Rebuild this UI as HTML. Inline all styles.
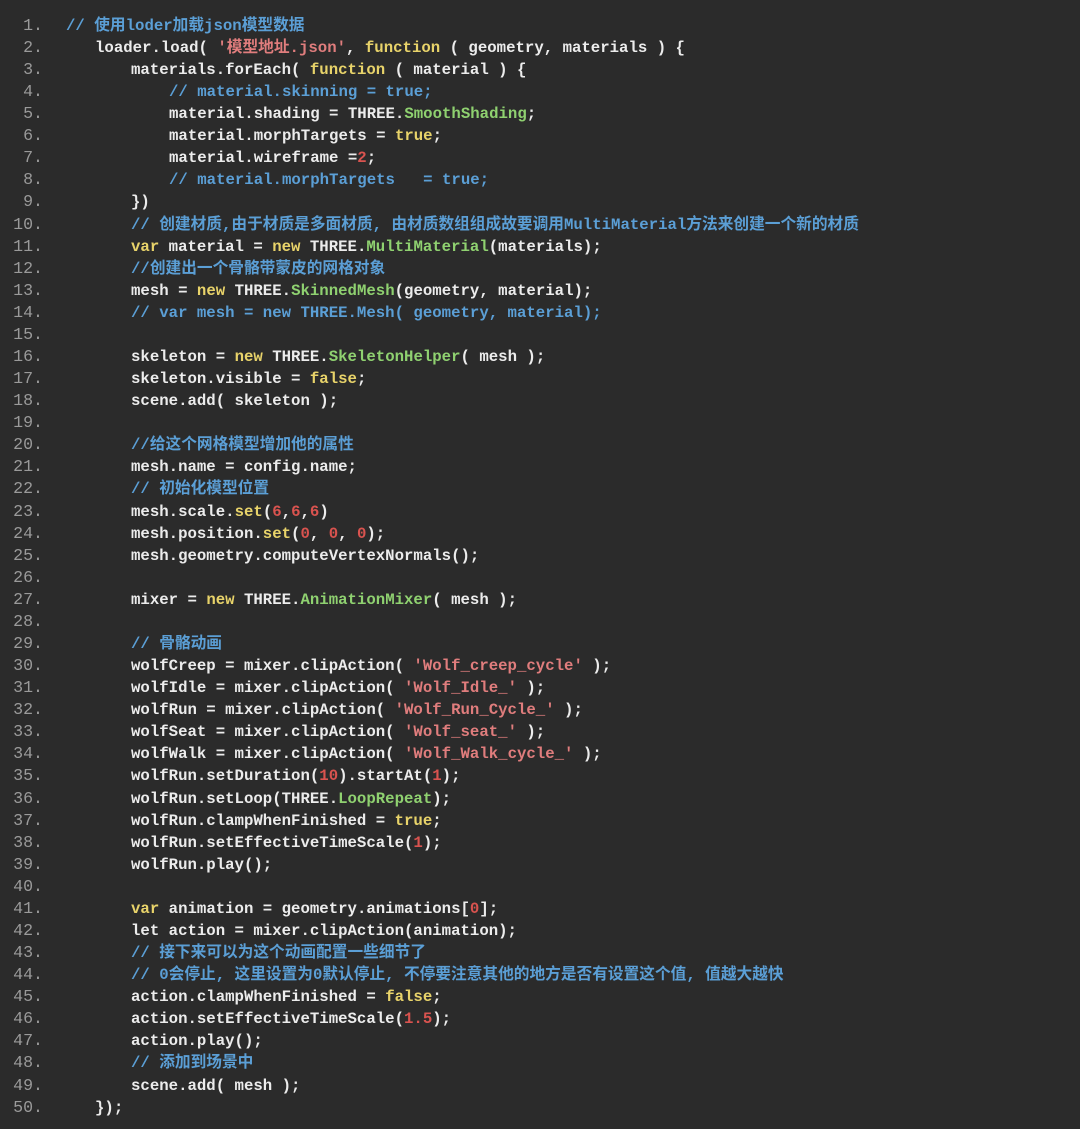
<!DOCTYPE html>
<html><head><meta charset="utf-8"><style>
html,body{margin:0;padding:0;background:#2b2b2b;}
body{width:1080px;height:1129px;overflow:hidden;position:relative;font-family:"Liberation Mono","Noto Sans CJK SC",monospace;font-size:15.7px;}
.l{position:absolute;left:0;height:22.08px;line-height:22.08px;white-space:pre;color:#ececec;font-weight:bold;}
.n{display:inline-block;width:43px;text-align:right;color:#9a9a9a;font-weight:normal;font-family:"Liberation Mono",monospace;font-size:16.6px;}
.c{color:#5b9fd6;}
.k{color:#e8d36a;}
.s{color:#e07d7d;}
.g{color:#8fd170;}
.r{color:#d9534f;}
.i0{position:absolute;left:66px}.i1{position:absolute;left:95px}.i2{position:absolute;left:131px}.i3{position:absolute;left:169px}
</style></head><body>
<div class="l" style="top:15px"><span class="n">1.</span><span class="i0 c">// 使用loder加载json模型数据</span></div>
<div class="l" style="top:37px"><span class="n">2.</span><span class="i1">loader.load( <span class="s">'模型地址.json'</span>, <span class="k">function</span> ( geometry, materials ) {</span></div>
<div class="l" style="top:59px"><span class="n">3.</span><span class="i2">materials.forEach( <span class="k">function</span> ( material ) {</span></div>
<div class="l" style="top:81px"><span class="n">4.</span><span class="i3 c">// material.skinning = true;</span></div>
<div class="l" style="top:103px"><span class="n">5.</span><span class="i3">material.shading = THREE.<span class="g">SmoothShading</span>;</span></div>
<div class="l" style="top:125px"><span class="n">6.</span><span class="i3">material.morphTargets = <span class="k">true</span>;</span></div>
<div class="l" style="top:147px"><span class="n">7.</span><span class="i3">material.wireframe =<span class="r">2</span>;</span></div>
<div class="l" style="top:169px"><span class="n">8.</span><span class="i3 c">// material.morphTargets   = true;</span></div>
<div class="l" style="top:191px"><span class="n">9.</span><span class="i2">})</span></div>
<div class="l" style="top:214px"><span class="n">10.</span><span class="i2 c">// 创建材质,由于材质是多面材质, 由材质数组组成故要调用MultiMaterial方法来创建一个新的材质</span></div>
<div class="l" style="top:236px"><span class="n">11.</span><span class="i2"><span class="k">var</span> material = <span class="k">new</span> THREE.<span class="g">MultiMaterial</span>(materials);</span></div>
<div class="l" style="top:258px"><span class="n">12.</span><span class="i2 c">//创建出一个骨骼带蒙皮的网格对象</span></div>
<div class="l" style="top:280px"><span class="n">13.</span><span class="i2">mesh = <span class="k">new</span> THREE.<span class="g">SkinnedMesh</span>(geometry, material);</span></div>
<div class="l" style="top:302px"><span class="n">14.</span><span class="i2 c">// var mesh = new THREE.Mesh( geometry, material);</span></div>
<div class="l" style="top:324px"><span class="n">15.</span></div>
<div class="l" style="top:346px"><span class="n">16.</span><span class="i2">skeleton = <span class="k">new</span> THREE.<span class="g">SkeletonHelper</span>( mesh );</span></div>
<div class="l" style="top:368px"><span class="n">17.</span><span class="i2">skeleton.visible = <span class="k">false</span>;</span></div>
<div class="l" style="top:390px"><span class="n">18.</span><span class="i2">scene.add( skeleton );</span></div>
<div class="l" style="top:412px"><span class="n">19.</span></div>
<div class="l" style="top:434px"><span class="n">20.</span><span class="i2 c">//给这个网格模型增加他的属性</span></div>
<div class="l" style="top:456px"><span class="n">21.</span><span class="i2">mesh.name = config.name;</span></div>
<div class="l" style="top:478px"><span class="n">22.</span><span class="i2 c">// 初始化模型位置</span></div>
<div class="l" style="top:501px"><span class="n">23.</span><span class="i2">mesh.scale.<span class="k">set</span>(<span class="r">6</span>,<span class="r">6</span>,<span class="r">6</span>)</span></div>
<div class="l" style="top:523px"><span class="n">24.</span><span class="i2">mesh.position.<span class="k">set</span>(<span class="r">0</span>, <span class="r">0</span>, <span class="r">0</span>);</span></div>
<div class="l" style="top:545px"><span class="n">25.</span><span class="i2">mesh.geometry.computeVertexNormals();</span></div>
<div class="l" style="top:567px"><span class="n">26.</span></div>
<div class="l" style="top:589px"><span class="n">27.</span><span class="i2">mixer = <span class="k">new</span> THREE.<span class="g">AnimationMixer</span>( mesh );</span></div>
<div class="l" style="top:611px"><span class="n">28.</span></div>
<div class="l" style="top:633px"><span class="n">29.</span><span class="i2 c">// 骨骼动画</span></div>
<div class="l" style="top:655px"><span class="n">30.</span><span class="i2">wolfCreep = mixer.clipAction( <span class="s">'Wolf_creep_cycle'</span> );</span></div>
<div class="l" style="top:677px"><span class="n">31.</span><span class="i2">wolfIdle = mixer.clipAction( <span class="s">'Wolf_Idle_'</span> );</span></div>
<div class="l" style="top:699px"><span class="n">32.</span><span class="i2">wolfRun = mixer.clipAction( <span class="s">'Wolf_Run_Cycle_'</span> );</span></div>
<div class="l" style="top:721px"><span class="n">33.</span><span class="i2">wolfSeat = mixer.clipAction( <span class="s">'Wolf_seat_'</span> );</span></div>
<div class="l" style="top:743px"><span class="n">34.</span><span class="i2">wolfWalk = mixer.clipAction( <span class="s">'Wolf_Walk_cycle_'</span> );</span></div>
<div class="l" style="top:765px"><span class="n">35.</span><span class="i2">wolfRun.setDuration(<span class="r">10</span>).startAt(<span class="r">1</span>);</span></div>
<div class="l" style="top:788px"><span class="n">36.</span><span class="i2">wolfRun.setLoop(THREE.<span class="g">LoopRepeat</span>);</span></div>
<div class="l" style="top:810px"><span class="n">37.</span><span class="i2">wolfRun.clampWhenFinished = <span class="k">true</span>;</span></div>
<div class="l" style="top:832px"><span class="n">38.</span><span class="i2">wolfRun.setEffectiveTimeScale(<span class="r">1</span>);</span></div>
<div class="l" style="top:854px"><span class="n">39.</span><span class="i2">wolfRun.play();</span></div>
<div class="l" style="top:876px"><span class="n">40.</span></div>
<div class="l" style="top:898px"><span class="n">41.</span><span class="i2"><span class="k">var</span> animation = geometry.animations[<span class="r">0</span>];</span></div>
<div class="l" style="top:920px"><span class="n">42.</span><span class="i2">let action = mixer.clipAction(animation);</span></div>
<div class="l" style="top:942px"><span class="n">43.</span><span class="i2 c">// 接下来可以为这个动画配置一些细节了</span></div>
<div class="l" style="top:964px"><span class="n">44.</span><span class="i2 c">// 0会停止, 这里设置为0默认停止, 不停要注意其他的地方是否有设置这个值, 值越大越快</span></div>
<div class="l" style="top:986px"><span class="n">45.</span><span class="i2">action.clampWhenFinished = <span class="k">false</span>;</span></div>
<div class="l" style="top:1008px"><span class="n">46.</span><span class="i2">action.setEffectiveTimeScale(<span class="r">1.5</span>);</span></div>
<div class="l" style="top:1030px"><span class="n">47.</span><span class="i2">action.play();</span></div>
<div class="l" style="top:1052px"><span class="n">48.</span><span class="i2 c">// 添加到场景中</span></div>
<div class="l" style="top:1075px"><span class="n">49.</span><span class="i2">scene.add( mesh );</span></div>
<div class="l" style="top:1097px"><span class="n">50.</span><span class="i1">});</span></div>
</body></html>
